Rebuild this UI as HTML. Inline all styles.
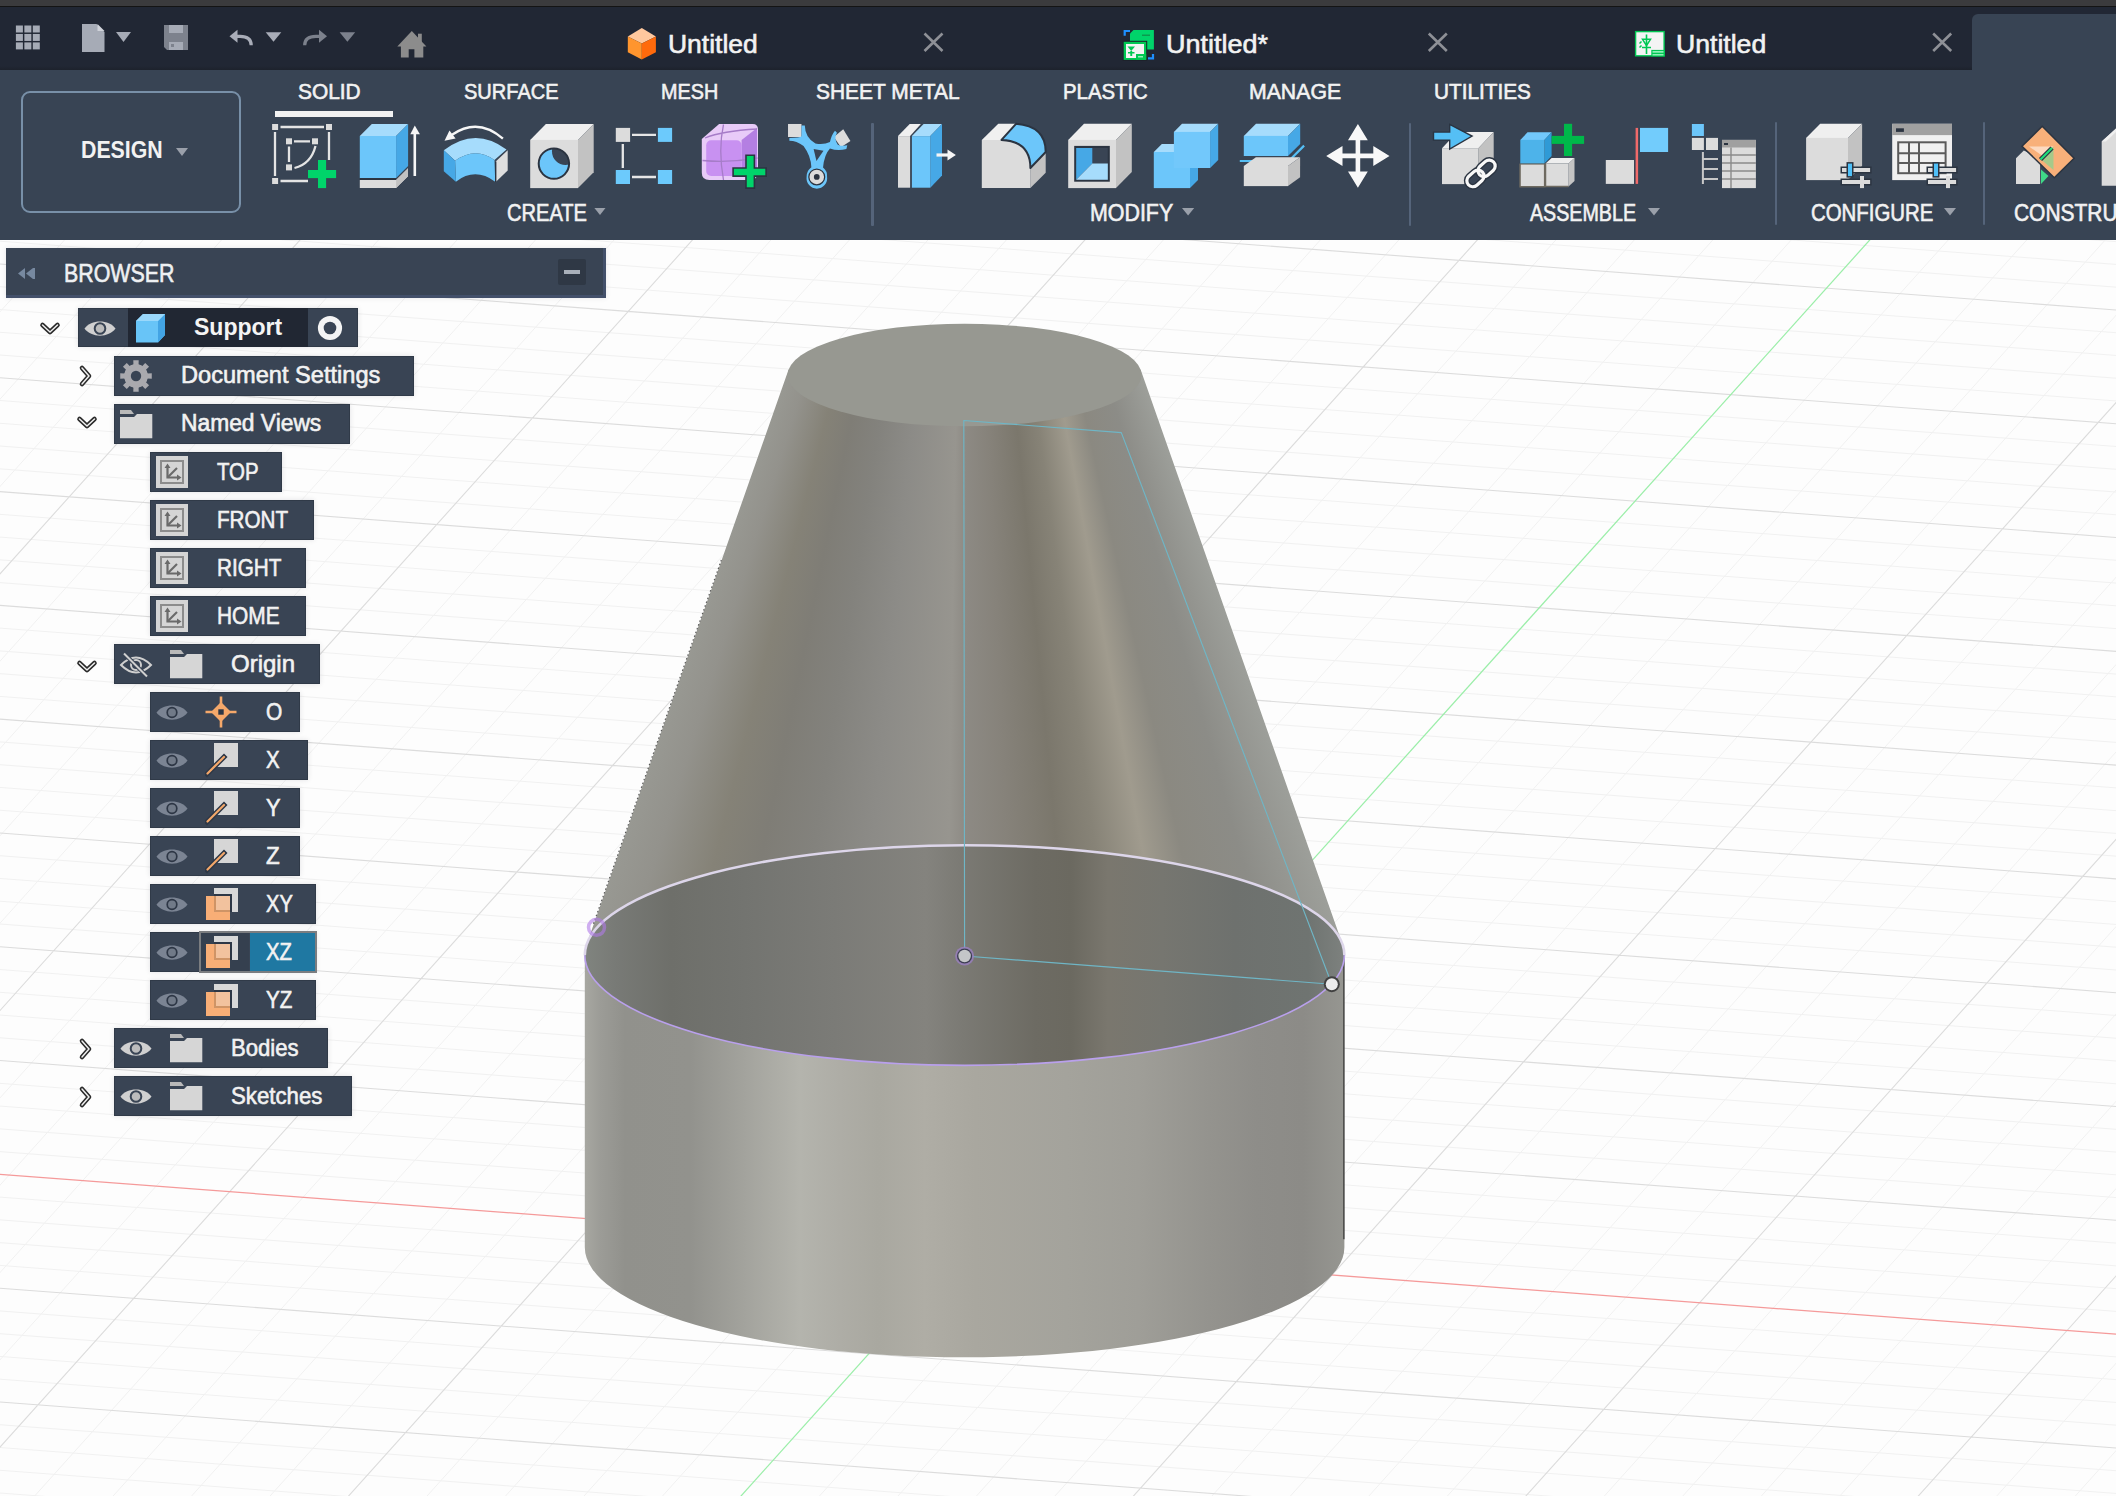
<!DOCTYPE html>
<html><head><meta charset="utf-8"><title>Fusion</title>
<style>
*{box-sizing:border-box;margin:0;padding:0}
html,body{width:2116px;height:1496px;overflow:hidden;background:#fdfdfd;font-family:"Liberation Sans",sans-serif}
.a{position:absolute}
#strip{left:0;top:0;width:2116px;height:6px;background:#3b3b3d}
#strip2{left:0;top:6px;width:2116px;height:1px;background:#141414}
#tabbar{left:0;top:7px;width:2116px;height:63px;background:#212734}
#tabshade{left:0;top:66px;width:1972px;height:4px;background:linear-gradient(#212734,#1d222c)}
#acttab{left:1972px;top:14px;width:144px;height:56px;background:#384454;border-top-left-radius:6px}
#toolbar{left:0;top:70px;width:2116px;height:170px;background:#384454}
#vp{left:0;top:240px;width:2116px;height:1256px;overflow:hidden}
.tt{color:#f4f4f4;font-size:25px;white-space:nowrap}
.tl{color:#f0f0f0;font-size:21px;white-space:nowrap;letter-spacing:0px}
.gl{color:#f0f0f0;font-size:22px;white-space:nowrap}
.sep{width:2.4px;background:#55647a;border-radius:1px}
.row{position:absolute;height:40px;background:#394555;box-shadow:0 4px 4px rgba(0,0,0,0.06)}
.rt{position:absolute;color:#f2f2f2;font-size:23px;white-space:nowrap;top:7px}
</style></head><body>

<div class="a" id="strip"></div><div class="a" id="strip2"></div><div class="a" id="tabbar"></div><div class="a" id="tabshade"></div><div class="a" id="acttab"></div><div class="a" id="toolbar"></div>
<svg class="a" style="left:0;top:0" width="2116" height="1496" viewBox="0 0 2116 1496">
<rect x="0" y="240" width="2116" height="1256" fill="#fdfdfd"/>
<g clip-path="url(#vpclip)"><clipPath id="vpclip"><rect x="0" y="240" width="2116" height="1256"/></clipPath>
<path d="M-3696.7 -675.2L8269.2 228.2M-3715.9 -653.9L8250.0 249.6M-3735.1 -632.6L8230.9 270.9M-3754.2 -611.2L8211.7 292.2M-3792.5 -568.6L8173.4 334.8M-3811.7 -547.3L8154.3 356.1M-3830.8 -526.0L8135.1 377.4M-3850.0 -504.7L8116.0 398.8M-3888.3 -462.0L8077.7 441.4M-3907.4 -440.7L8058.5 462.7M-3926.6 -419.4L8039.4 484.0M-3945.7 -398.1L8020.2 505.3M-3984.1 -355.5L7981.9 548.0M-4003.2 -334.2L7962.7 569.3M-4022.4 -312.8L7943.6 590.6M-4041.5 -291.5L7924.4 611.9M-4079.8 -248.9L7886.1 654.5M-4099.0 -227.6L7867.0 675.8M-4118.1 -206.3L7847.8 697.2M-4137.3 -185.0L7828.7 718.5M-4175.6 -142.3L7790.3 761.1M-4194.8 -121.0L7771.2 782.4M-4213.9 -99.7L7752.0 803.7M-4233.1 -78.4L7732.9 825.0M-4271.4 -35.8L7694.6 867.7M-4290.5 -14.4L7675.4 889.0M-4309.7 6.9L7656.3 910.3M-4328.8 28.2L7637.1 931.6M-4367.1 70.8L7598.8 974.2M-4386.3 92.1L7579.7 995.6M-4405.4 113.4L7560.5 1016.9M-4424.6 134.8L7541.3 1038.2M-4462.9 177.4L7503.0 1080.8M-4482.1 198.7L7483.9 1102.1M-4501.2 220.0L7464.7 1123.4M-4520.4 241.3L7445.6 1144.8M-4558.7 283.9L7407.3 1187.4M-4577.8 305.3L7388.1 1208.7M-4597.0 326.6L7369.0 1230.0M-4616.1 347.9L7349.8 1251.3M-4654.4 390.5L7311.5 1293.9M-4673.6 411.8L7292.3 1315.3M-4692.8 433.1L7273.2 1336.6M-4711.9 454.5L7254.0 1357.9M-4750.2 497.1L7215.7 1400.5M-4769.4 518.4L7196.6 1421.8M-4788.5 539.7L7177.4 1443.1M-4807.7 561.0L7158.3 1464.5M-4846.0 603.7L7120.0 1507.1M-4865.1 625.0L7100.8 1528.4M-4884.3 646.3L7081.7 1549.7M-4903.4 667.6L7062.5 1571.0M-4941.8 710.2L7024.2 1613.7M-4960.9 731.5L7005.0 1635.0M-4980.1 752.9L6985.9 1656.3M-4999.2 774.2L6966.7 1677.6M-5037.5 816.8L6928.4 1720.2M-5056.7 838.1L6909.3 1741.5M-5075.8 859.4L6890.1 1762.9M-5095.0 880.7L6871.0 1784.2M-5133.3 923.4L6832.6 1826.8M-5152.5 944.7L6813.5 1848.1M-5171.6 966.0L6794.3 1869.4M-5190.8 987.3L6775.2 1890.7M-5229.1 1029.9L6736.9 1933.4M-5248.2 1051.3L6717.7 1954.7M-5267.4 1072.6L6698.6 1976.0M-5286.5 1093.9L6679.4 1997.3M-5324.8 1136.5L6641.1 2039.9M-5344.0 1157.8L6622.0 2061.3M-5363.1 1179.1L6602.8 2082.6M-5382.3 1200.5L6583.6 2103.9M2108.6 -3432.0L-5912.4 5493.5M2182.1 -3426.4L-5838.9 5499.1M2255.6 -3420.9L-5765.4 5504.6M2329.1 -3415.3L-5691.9 5510.2M2476.1 -3404.2L-5544.9 5521.3M2549.6 -3398.7L-5471.4 5526.8M2623.1 -3393.1L-5397.9 5532.4M2696.6 -3387.6L-5324.4 5537.9M2843.6 -3376.5L-5177.4 5549.0M2917.1 -3370.9L-5103.9 5554.6M2990.6 -3365.4L-5030.4 5560.1M3064.1 -3359.8L-4956.9 5565.7M3211.1 -3348.7L-4809.9 5576.8M3284.6 -3343.2L-4736.4 5582.3M3358.1 -3337.6L-4662.9 5587.9M3431.6 -3332.1L-4589.4 5593.4M3578.6 -3321.0L-4442.4 5604.5M3652.1 -3315.4L-4368.9 5610.1M3725.6 -3309.9L-4295.4 5615.6M3799.1 -3304.3L-4221.9 5621.2M3946.1 -3293.2L-4074.9 5632.3M4019.6 -3287.7L-4001.4 5637.8M4093.1 -3282.1L-3927.9 5643.4M4166.6 -3276.6L-3854.4 5648.9M4313.6 -3265.5L-3707.4 5660.0M4387.1 -3259.9L-3633.9 5665.5M4460.6 -3254.4L-3560.4 5671.1M4534.1 -3248.8L-3486.9 5676.6M4681.1 -3237.7L-3339.9 5687.7M4754.6 -3232.2L-3266.4 5693.3M4828.1 -3226.6L-3192.9 5698.8M4901.6 -3221.1L-3119.4 5704.4M5048.6 -3210.0L-2972.4 5715.5M5122.1 -3204.4L-2898.9 5721.0M5195.6 -3198.9L-2825.4 5726.6M5269.1 -3193.3L-2751.9 5732.1M5416.1 -3182.2L-2604.9 5743.2M5489.6 -3176.7L-2531.4 5748.8M5563.1 -3171.1L-2457.9 5754.3M5636.6 -3165.6L-2384.4 5759.9M5783.6 -3154.5L-2237.4 5771.0M5857.1 -3149.0L-2163.9 5776.5M5930.6 -3143.4L-2090.4 5782.1M6004.1 -3137.9L-2016.9 5787.6M6151.1 -3126.8L-1869.9 5798.7M6224.6 -3121.2L-1796.4 5804.3M6298.1 -3115.7L-1722.9 5809.8M6371.6 -3110.1L-1649.4 5815.4M6518.6 -3099.0L-1502.4 5826.5M6592.1 -3093.5L-1428.9 5832.0M6665.6 -3087.9L-1355.4 5837.6M6739.1 -3082.4L-1281.9 5843.1M6886.1 -3071.3L-1134.9 5854.2M6959.6 -3065.7L-1061.4 5859.8M7033.1 -3060.2L-987.9 5865.3M7106.6 -3054.6L-914.4 5870.9M7253.6 -3043.5L-767.4 5882.0M7327.1 -3038.0L-693.9 5887.5M7400.6 -3032.4L-620.4 5893.1M7474.1 -3026.9L-546.9 5898.6M7621.1 -3015.8L-399.9 5909.7M7694.6 -3010.2L-326.4 5915.3M7768.1 -3004.7L-252.9 5920.8M7841.6 -2999.1L-179.4 5926.4M7988.6 -2988.0L-32.4 5937.5M8062.1 -2982.5L41.1 5943.0M8135.6 -2976.9L114.6 5948.6M8209.1 -2971.4L188.1 5954.1" stroke="#f1f1f1" stroke-width="1" fill="none"/>
<path d="M-3677.6 -696.5L8288.4 206.9M-3773.4 -589.9L8192.6 313.5M-3869.1 -483.4L8096.8 420.1M-3964.9 -376.8L8001.0 526.6M-4060.7 -270.2L7905.3 633.2M-4156.4 -163.6L7809.5 739.8M-4252.2 -57.1L7713.7 846.4M-4348.0 49.5L7618.0 952.9M-4443.8 156.1L7522.2 1059.5M-4539.5 262.6L7426.4 1166.1M-4635.3 369.2L7330.7 1272.6M-4731.1 475.8L7234.9 1379.2M-4826.8 582.3L7139.1 1485.8M-4922.6 688.9L7043.3 1592.3M-5114.1 902.1L6851.8 1805.5M-5209.9 1008.6L6756.0 1912.1M-5305.7 1115.2L6660.3 2018.6M2035.1 -3437.5L-5985.9 5488.0M2402.6 -3409.8L-5618.4 5515.7M2770.1 -3382.0L-5250.9 5543.5M3137.6 -3354.3L-4883.4 5571.2M3505.1 -3326.5L-4515.9 5599.0M3872.6 -3298.8L-4148.4 5626.7M4240.1 -3271.0L-3780.9 5654.4M4607.6 -3243.3L-3413.4 5682.2M5342.6 -3187.8L-2678.4 5737.7M5710.1 -3160.0L-2310.9 5765.4M6077.6 -3132.3L-1943.4 5793.2M6445.1 -3104.6L-1575.9 5820.9M6812.6 -3076.8L-1208.4 5848.7M7180.1 -3049.1L-840.9 5876.4M7547.6 -3021.3L-473.4 5904.2M7915.1 -2993.6L-105.9 5931.9" stroke="#dcdcdc" stroke-width="1.1" fill="none"/>
<path d="M-5018.4 795.5L6947.6 1698.9" stroke="#f59a9a" stroke-width="1.25" fill="none"/>
<path d="M4975.1 -3215.5L-3045.9 5709.9" stroke="#9beea9" stroke-width="1.25" fill="none"/>
</g>
</svg>
<svg class="a" style="left:0;top:0" width="2116" height="1496"><defs><linearGradient id="cylg" gradientUnits="userSpaceOnUse" x1="584.8" y1="0" x2="1344.4" y2="0"><stop offset="0.0003" stop-color="#a7a7a1"/><stop offset="0.0200" stop-color="#9c9c97"/><stop offset="0.0529" stop-color="#91918c"/><stop offset="0.1385" stop-color="#92928d"/><stop offset="0.2109" stop-color="#a3a39d"/><stop offset="0.2833" stop-color="#b4b4ad"/><stop offset="0.3360" stop-color="#aeada6"/><stop offset="0.3860" stop-color="#a9a8a0"/><stop offset="0.4479" stop-color="#afada5"/><stop offset="0.5137" stop-color="#a9a79f"/><stop offset="0.6348" stop-color="#a4a39c"/><stop offset="0.7283" stop-color="#9f9e98"/><stop offset="0.8217" stop-color="#94938e"/><stop offset="0.8836" stop-color="#8e8d89"/><stop offset="0.9455" stop-color="#8c8b87"/><stop offset="0.9995" stop-color="#969691"/></linearGradient></defs><path d="M584.8 955.3 L584.8 1247.2 A379.8 110.1 0 0 0 1344.4 1247.2 L1344.4 955.3 A379.8 110.1 0 0 1 584.8 955.3 Z" fill="url(#cylg)"/><path d="M1343.9 955.3 L1343.9 1239.2" stroke="#333" stroke-width="1.2"/></svg>
<div class="a" style="left:0;top:0;width:2116px;height:1496px;background:conic-gradient(from 150deg at 964.6px -131.0px, #a3a59f 9.01deg, #9c9e99 10.80deg, #8c8c87 14.36deg, #8b8981 17.57deg, #a09b8e 19.72deg, #878377 22.41deg, #7b776c 24.63deg, #86827a 27.51deg, #8d8a84 29.90deg, #97958f 30.91deg, #8c8b87 35.39deg, #83827d 38.74deg, #7f7d76 41.62deg, #858277 44.16deg, #93928c 47.32deg, #9a9b95 50.17deg, #a0a09a 51.06deg);clip-path:path('M788.5 369.8 L586.8 944.1 A379.8 110.1 0 1 0 1342.4 944.1 L1140.7 369.8 Z')"></div>
<svg class="a" style="left:0;top:0" width="2116" height="1496"><defs><linearGradient id="ing" gradientUnits="userSpaceOnUse" x1="584.8" y1="0" x2="1344.4" y2="0"><stop offset="0.0003" stop-color="#80847f"/><stop offset="0.0411" stop-color="#787a76"/><stop offset="0.1135" stop-color="#6e6f6a"/><stop offset="0.2096" stop-color="#737470"/><stop offset="0.3294" stop-color="#7b7b77"/><stop offset="0.4492" stop-color="#84837e"/><stop offset="0.4966" stop-color="#7b7a74"/><stop offset="0.5927" stop-color="#6d6b63"/><stop offset="0.6401" stop-color="#6b6960"/><stop offset="0.6888" stop-color="#7a776e"/><stop offset="0.7599" stop-color="#767670"/><stop offset="0.8560" stop-color="#6e716e"/><stop offset="0.9521" stop-color="#6f7471"/><stop offset="0.9995" stop-color="#7d817e"/></linearGradient></defs><ellipse cx="964.6" cy="955.3" rx="379.8" ry="110.1" fill="url(#ing)"/><ellipse cx="964.6" cy="375.0" rx="177.0" ry="51.3" fill="#979891"/><path d="M721.3 560.0 L592.7 926.0" stroke="#222" stroke-width="1.1" stroke-dasharray="1.5 2.5" stroke-opacity="0.75"/><path d="M584.8 955.3 A379.8 110.1 0 0 1 1344.4 955.3" stroke="#ddd6ea" stroke-width="2.6" fill="none"/><path d="M584.8 955.3 A379.8 110.1 0 0 0 1344.4 955.3" stroke="#b9a0ec" stroke-width="1.6" fill="none"/><path d="M964.6 956 L963.8 420.5 L1121.3 432.6 L1331.8 984.2 Z" stroke="#6fb6c6" stroke-width="1.15" fill="none" stroke-linejoin="round"/><circle cx="964.6" cy="956" r="9.5" fill="#9a7fc0" fill-opacity="0.8"/><circle cx="964.6" cy="956" r="7.6" fill="#3c3d52"/><circle cx="964.6" cy="956" r="6.2" fill="#c4c6c8"/><circle cx="1331.8" cy="984.2" r="8" fill="#404040"/><circle cx="1331.8" cy="984.2" r="6" fill="#ececec"/><circle cx="596.5" cy="927.3" r="8" fill="none" stroke="#b07ae8" stroke-width="3.5" stroke-opacity="0.6"/></svg>
<div class="a" style="left:668.00px;top:31.19px;font-size:26.29px;line-height:26.29px;color:#f2f2f2;white-space:nowrap;transform:scaleX(1.0066);transform-origin:0 0;-webkit-text-stroke:0.60px #f2f2f2;">Untitled</div>
<div class="a" style="left:1165.70px;top:31.19px;font-size:26.29px;line-height:26.29px;color:#f2f2f2;white-space:nowrap;transform:scaleX(1.0276);transform-origin:0 0;-webkit-text-stroke:0.60px #f2f2f2;">Untitled*</div>
<div class="a" style="left:1675.60px;top:31.19px;font-size:26.29px;line-height:26.29px;color:#f2f2f2;white-space:nowrap;transform:scaleX(1.0122);transform-origin:0 0;-webkit-text-stroke:0.60px #f2f2f2;">Untitled</div>
<div class="a" style="left:297.80px;top:80.70px;font-size:21.86px;line-height:21.86px;color:#f2f2f2;white-space:nowrap;transform:scaleX(0.9547);transform-origin:0 0;-webkit-text-stroke:0.60px #f2f2f2;">SOLID</div>
<div class="a" style="left:464.40px;top:80.70px;font-size:21.86px;line-height:21.86px;color:#f2f2f2;white-space:nowrap;transform:scaleX(0.9160);transform-origin:0 0;-webkit-text-stroke:0.60px #f2f2f2;">SURFACE</div>
<div class="a" style="left:660.50px;top:80.70px;font-size:21.86px;line-height:21.86px;color:#f2f2f2;white-space:nowrap;transform:scaleX(0.9055);transform-origin:0 0;-webkit-text-stroke:0.60px #f2f2f2;">MESH</div>
<div class="a" style="left:816.40px;top:80.70px;font-size:21.86px;line-height:21.86px;color:#f2f2f2;white-space:nowrap;transform:scaleX(0.9584);transform-origin:0 0;-webkit-text-stroke:0.60px #f2f2f2;">SHEET METAL</div>
<div class="a" style="left:1062.90px;top:80.70px;font-size:21.86px;line-height:21.86px;color:#f2f2f2;white-space:nowrap;transform:scaleX(0.9304);transform-origin:0 0;-webkit-text-stroke:0.60px #f2f2f2;">PLASTIC</div>
<div class="a" style="left:1248.70px;top:80.70px;font-size:21.86px;line-height:21.86px;color:#f2f2f2;white-space:nowrap;transform:scaleX(0.9720);transform-origin:0 0;-webkit-text-stroke:0.60px #f2f2f2;">MANAGE</div>
<div class="a" style="left:1434.00px;top:80.70px;font-size:21.86px;line-height:21.86px;color:#f2f2f2;white-space:nowrap;transform:scaleX(0.9503);transform-origin:0 0;-webkit-text-stroke:0.60px #f2f2f2;">UTILITIES</div>
<div class="a" style="left:507.00px;top:202.05px;font-size:23.43px;line-height:23.43px;color:#f2f2f2;white-space:nowrap;transform:scaleX(0.8579);transform-origin:0 0;-webkit-text-stroke:0.60px #f2f2f2;">CREATE</div>
<div class="a" style="left:1090.40px;top:202.05px;font-size:23.43px;line-height:23.43px;color:#f2f2f2;white-space:nowrap;transform:scaleX(0.9129);transform-origin:0 0;-webkit-text-stroke:0.60px #f2f2f2;">MODIFY</div>
<div class="a" style="left:1530.00px;top:202.05px;font-size:23.43px;line-height:23.43px;color:#f2f2f2;white-space:nowrap;transform:scaleX(0.8394);transform-origin:0 0;-webkit-text-stroke:0.60px #f2f2f2;">ASSEMBLE</div>
<div class="a" style="left:1810.50px;top:202.05px;font-size:23.43px;line-height:23.43px;color:#f2f2f2;white-space:nowrap;transform:scaleX(0.8714);transform-origin:0 0;-webkit-text-stroke:0.60px #f2f2f2;">CONFIGURE</div>
<div class="a" style="left:2014.40px;top:202.05px;font-size:23.43px;line-height:23.43px;color:#f2f2f2;white-space:nowrap;transform:scaleX(0.8942);transform-origin:0 0;-webkit-text-stroke:0.60px #f2f2f2;">CONSTRU</div>
<div class="a" style="left:80.70px;top:138.73px;font-size:23.57px;line-height:23.57px;font-weight:bold;color:#f2f2f2;white-space:nowrap;transform:scaleX(0.9049);transform-origin:0 0;">DESIGN</div>
<div class="a" style="left:21px;top:91px;width:220px;height:122px;border:2px solid #7890a8;border-radius:9px"></div>
<div class="a" style="left:275px;top:111px;width:118px;height:6px;background:#f2f2f2"></div>
<div class="a sep" style="left:871.2px;top:123px;height:103px"></div>
<div class="a sep" style="left:1408.8px;top:123px;height:103px"></div>
<div class="a sep" style="left:1774.8px;top:122px;height:103px"></div>
<div class="a sep" style="left:1983px;top:122px;height:103px"></div>

<svg class="a" style="left:0;top:0" width="2116" height="240" viewBox="0 0 2116 240"><rect x="15.90" y="25.50" width="7.00" height="7.00" fill="#a6abb6" /><rect x="15.90" y="33.95" width="7.00" height="7.00" fill="#a6abb6" /><rect x="15.90" y="42.40" width="7.00" height="7.00" fill="#a6abb6" /><rect x="24.35" y="25.50" width="7.00" height="7.00" fill="#a6abb6" /><rect x="24.35" y="33.95" width="7.00" height="7.00" fill="#a6abb6" /><rect x="24.35" y="42.40" width="7.00" height="7.00" fill="#a6abb6" /><rect x="32.80" y="25.50" width="7.00" height="7.00" fill="#a6abb6" /><rect x="32.80" y="33.95" width="7.00" height="7.00" fill="#a6abb6" /><rect x="32.80" y="42.40" width="7.00" height="7.00" fill="#a6abb6" /><path d="M82 24 H96.5 L104.5 32 V52 H82 Z" fill="#a6abb6" /><path d="M97.5 24 L104.5 31 H97.5 Z" fill="#d0d3da" /><path d="M116 32 H131 L123.5 42 Z" fill="#a6abb6" /><path d="M164 25 H188 V50 H167 L164 47 Z" fill="#7d828d" /><rect x="169.00" y="25.00" width="14.00" height="8.00" fill="#a6abb6" /><rect x="169.00" y="42.00" width="14.00" height="8.00" fill="#a6abb6" /><rect x="171.00" y="44.00" width="3.00" height="3.00" fill="#7d828d" /><path d="M232 36.3 H240 Q251.2 36.3 251.2 45.2" stroke="#a9adb8" stroke-width="3.2" fill="none" /><path d="M229.5 36.3 L237.5 29.8 V42.8 Z" fill="#a9adb8" /><path d="M265.7 32.2 H281.3 L273.5 41.8 Z" fill="#a9adb8" /><path d="M324 36.3 H316 Q304.7 36.3 304.7 45.2" stroke="#7c818c" stroke-width="3.2" fill="none" /><path d="M327 36.3 L319 29.8 V42.8 Z" fill="#7c818c" /><path d="M339.6 32.2 H355.2 L347.4 41.8 Z" fill="#7c818c" /><path d="M397.3 46.6 L411.8 31.1 L426.4 46.6 Z" fill="#8c8c8c" /><rect x="418.00" y="33.70" width="3.80" height="8.30" fill="#8c8c8c" /><path d="M400.9 46 H423.3 V57.6 H414.4 V49.3 H408.7 V57.6 H400.9 Z" fill="#8c8c8c" /><path d="M641.8 28 L655.9 36.4 L641.8 43.6 L627.8 36.4 Z" fill="#ffc89e" /><path d="M627.8 36.4 L641.8 43.6 V59.4 L627.8 52.2 Z" fill="#ff952e" /><path d="M655.9 36.4 L641.8 43.6 V59.4 L655.9 52.2 Z" fill="#ff6a0c" /><path d="M924.5 33.5 L942.5 51 M942.5 33.5 L924.5 51" stroke="#8e9096" stroke-width="2.6" fill="none" /><path d="M1428.8 33.5 L1446.8 51 M1446.8 33.5 L1428.8 51" stroke="#8e9096" stroke-width="2.6" fill="none" /><path d="M1933.2 33.5 L1951.2 51 M1951.2 33.5 L1933.2 51" stroke="#8e9096" stroke-width="2.6" fill="none" /><path d="M1124.7 35.8 V31 H1130" stroke="#1e90ff" stroke-width="2.2" fill="none" /><path d="M1153 53.9 V58.4 H1148" stroke="#1e90ff" stroke-width="2.2" fill="none" /><path d="M1133.5 30 H1153.9 V49.6 H1130 V33.5 Z" fill="#00d46a" /><rect x="1142.00" y="34.50" width="8.00" height="1.50" fill="#0b9a4f" /><rect x="1122.70" y="40.80" width="24.50" height="20.10" fill="#1d222b" /><rect x="1123.70" y="41.80" width="22.50" height="18.10" fill="#00c853" /><rect x="1126.00" y="44.00" width="18.00" height="14.00" fill="#f4f4f4" /><path d="M1127.5 46.5 H1135 L1131.2 51 Z" fill="#00c853" /><rect x="1130.30" y="51.00" width="1.90" height="5.00" fill="#00c853" /><rect x="1128.00" y="52.00" width="6.50" height="1.50" fill="#00c853" /><rect x="1136.00" y="54.00" width="10.20" height="5.90" fill="#00c853" /><rect x="1138.00" y="56.00" width="5.00" height="1.50" fill="#8ff0b8" /><rect x="1634.90" y="30.90" width="29.90" height="25.60" fill="#00c853" /><rect x="1636.30" y="32.30" width="27.10" height="22.80" fill="#f4f4f4" /><path d="M1646.5 34.5 V54 M1642 47.5 H1651" stroke="#00c853" stroke-width="1.6" fill="none" /><path d="M1642.5 39.3 H1650.5 L1646.5 45.5 Z" fill="none" stroke="#00c853" stroke-width="1.5"/><path d="M1639.5 43.5 L1641.5 41.5 M1639.5 47.5 L1641.5 45.5" stroke="#00c853" stroke-width="1.5" fill="none" /><rect x="1651.30" y="49.90" width="13.50" height="6.60" fill="#00c853" /><rect x="1652.50" y="51.00" width="11.00" height="1.70" fill="#8ff0b8" /><rect x="1652.50" y="54.00" width="11.00" height="1.50" fill="#8ff0b8" /><rect x="272.10" y="124.00" width="6.00" height="6.00" fill="#dcdcdc" /><rect x="326.00" y="124.00" width="6.00" height="6.00" fill="#dcdcdc" /><rect x="272.10" y="178.00" width="6.00" height="6.00" fill="#dcdcdc" /><rect x="286.00" y="138.30" width="6.00" height="6.00" fill="#dcdcdc" /><rect x="312.00" y="138.30" width="6.00" height="6.00" fill="#dcdcdc" /><rect x="286.00" y="164.40" width="6.00" height="6.00" fill="#dcdcdc" /><path d="M280.5 127 H324 M275 132 V176 M329 132 V160 M280.5 181 H308 M294 141.3 H310 M289 146.5 V162" stroke="#e4e4e4" stroke-width="2.3" fill="none" /><path d="M315.5 146 Q311 164 294.5 168" stroke="#e4e4e4" stroke-width="2.3" fill="none" /><rect x="308.00" y="170.00" width="28.10" height="8.10" fill="#00d46a" /><rect x="318.00" y="160.00" width="8.10" height="28.10" fill="#00d46a" /><path d="M359.8 136.0 L371.8 124.0 L408.1 124.0 L396.1 136.0 Z" fill="#a6dcfc" /><path d="M396.1 136.0 L408.1 124.0 L408.1 166.1 L396.1 178.1 Z" fill="#46a8e6" /><rect x="359.80" y="136.00" width="36.30" height="42.10" fill="#6cc6fa" /><rect x="359.80" y="178.10" width="36.30" height="2.00" fill="#2b3441" /><path d="M359.8 180.1 H396.1 L408 168.2 V176.2 L396.1 188.1 H359.8 Z" fill="#dcdcdc" /><path d="M396.1 180.1 L408 168.2 V176.2 L396.1 188.1 Z" fill="#c2c2c2" /><path d="M414.8 133 V176" stroke="#f6f6f6" stroke-width="2.6" fill="none" /><path d="M410.3 134.2 L414.8 125.4 L419.9 134.2 Z" fill="#f6f6f6" /><path d="M443.8 150.3 Q475.2 126 506.5 149.5 L494.5 160 Q475.2 146 455.1 160.8 Z" fill="#a6dcfc" /><path d="M455.1 160.8 Q475.2 146 494.5 160 L495.2 181.8 Q475.2 167 455.9 181.7 Z" fill="#6cc6fa" /><path d="M443.8 150.3 L455.1 160.8 L455.9 181.7 L443.8 171.2 Z" fill="#46a8e6" /><path d="M495.7 161.6 L507.7 150.3 V170.4 L495.7 182.1 Z" fill="#dedede" /><path d="M495.7 161.6 V182.1" stroke="#2b3441" stroke-width="1.4" fill="none" /><path d="M502.9 138.7 Q478 117 452 134.8" stroke="#f6f6f6" stroke-width="2.4" fill="none" /><path d="M444.5 140.8 L449.5 130.5 L455.6 138.6 Z" fill="#f6f6f6" /><path d="M530.2 139.9 L545.9 124.0 L593.7 124.0 L578.0 139.9 Z" fill="#efefef" /><path d="M578.0 139.9 L593.7 124.0 L593.7 172.2 L578.0 188.1 Z" fill="#c2c2c2" /><rect x="530.20" y="139.90" width="47.80" height="48.20" fill="#dcdcdc" /><clipPath id="hc"><circle cx="553.9" cy="163.6" r="15"/></clipPath><circle cx="553.9" cy="163.6" r="15" fill="#6cc6fa"/><circle cx="565.5" cy="151.5" r="13.5" fill="#394454" clip-path="url(#hc)"/><circle cx="553.9" cy="163.6" r="15.2" fill="none" stroke="#2b3441" stroke-width="2"/><rect x="615.80" y="127.90" width="14.30" height="14.00" fill="#dcdcdc" /><rect x="657.90" y="127.90" width="14.20" height="14.00" fill="#6ccafc" /><rect x="615.80" y="170.00" width="14.20" height="14.00" fill="#6ccafc" /><rect x="657.90" y="170.00" width="14.20" height="14.00" fill="#6ccafc" /><path d="M632 134.9 H656 M622.8 144 V168 M632 177 H656" stroke="#e6e6e6" stroke-width="2.3" fill="none" /><path d="M701.8 139.1 L719.1 124 H752.8 Q758 124 758 129.5 V171.2 Q758 180.1 749.6 180.1 H709.4 Q701.8 180.1 701.8 172.8 Z" fill="#e8cbf8" /><path d="M741.6 140 L757 128 V172 Q757 176 752 176 H741.6 Z" fill="#b47fe2" /><rect x="706.2" y="140.3" width="35.4" height="35.7" rx="5" fill="#c891f1"/><path d="M702.5 160.5 Q730 163 757.5 158 M723.5 124.5 Q718 150 723.5 180 M705 138 Q722 131 757 129" stroke="#a67cc8" stroke-width="1.3" fill="none" /><path d="M746 155.2 H754.4 V168 H766.1 V176.1 H754.4 V188.1 H746 V176.1 H733.1 V168 H746 Z" fill="#00d46a" stroke="#2b3441" stroke-width="1.6"/><g transform="translate(775 115) scale(0.08979)"><rect x="145" y="100" width="150" height="145" fill="#dcdcdc"/><path d="M655 245 L760 160 L840 290 L735 360 Z" fill="#dcdcdc"/><path d="M295 118 L332 118 Q335 255 450 318 Q545 335 612 300 Q630 220 668 175 L690 198 Q652 262 700 330 Q745 352 805 338 L795 378 Q700 405 612 372 Q548 440 535 585 Q585 625 580 690 A115 115 0 1 1 352 690 Q350 620 405 582 Q400 455 318 345 Q240 288 160 288 L160 255 Q280 255 295 238 Z" fill="#6cc6fa"/><path d="M430 378 L540 398 L462 512 Z" fill="#394454"/><circle cx="465" cy="690" r="88" fill="#dcdcdc" stroke="#2b3441" stroke-width="14"/><circle cx="465" cy="690" r="32" fill="#2b3441"/></g><path d="M898 136.1 L909.7 124 H920.9 L910.1 136.1 Z" fill="#f0f0f0" /><rect x="898.00" y="136.10" width="12.10" height="51.60" fill="#dcdcdc" /><path d="M911.9 136.1 L923.6 124.0 L942.0 124.0 L930.3 136.1 Z" fill="#a6dcfc" /><path d="M930.3 136.1 L942.0 124.0 L942.0 175.6 L930.3 187.7 Z" fill="#46a8e6" /><rect x="911.90" y="136.10" width="18.40" height="51.60" fill="#6cc6fa" /><path d="M936.5 155 H948.5" stroke="#f6f6f6" stroke-width="3.2" fill="none" stroke-linecap="butt"/><path d="M947.5 149.5 L955.9 155 L947.5 160.5 Z" fill="#f6f6f6" /><path d="M981.8 139.9 L998.3 123.8 H1016 L1001.5 139.9 Z" fill="#f0f0f0" /><path d="M1030.4 168 L1045.7 152 V172.8 L1030.4 188.1 Z" fill="#c2c2c2" /><path d="M981.8 139.9 H1001.5 Q1030.4 141 1030.4 168 V188.1 H981.8 Z" fill="#dcdcdc" /><path d="M1001.5 139.9 L1016 123.8 Q1045.7 126 1045.7 152 L1030.4 168 Q1030.4 141 1001.5 139.9 Z" fill="#6cc6fa" stroke="#2b3441" stroke-width="2" stroke-linejoin="round"/><path d="M1068.2 139.9 L1084.0 123.8 L1131.8 123.8 L1116.0 139.9 Z" fill="#efefef" /><path d="M1116.0 139.9 L1131.8 123.8 L1131.8 172.0 L1116.0 188.1 Z" fill="#c2c2c2" /><rect x="1068.20" y="139.90" width="47.80" height="48.20" fill="#dcdcdc" /><rect x="1074.20" y="145.90" width="35.60" height="35.80" fill="#2b3441" /><rect x="1076.20" y="147.90" width="31.60" height="31.80" fill="#394454" /><path d="M1076.2 147.9 H1092.3 V163.6 L1076.2 179.7 Z" fill="#46a8e6" /><path d="M1076.2 179.7 L1092.3 163.6 H1107.8 V179.7 Z" fill="#a6dcfc" /><path d="M1153.8 152.0 L1161.8 143.9 L1198.0 143.9 L1190.0 152.0 Z" fill="#a6dcfc" /><path d="M1190.0 152.0 L1198.0 143.9 L1198.0 180.0 L1190.0 188.1 Z" fill="#46a8e6" /><rect x="1153.80" y="152.00" width="36.20" height="36.10" fill="#6cc6fa" /><path d="M1173.9 131.9 L1182.0 123.8 L1218.2 123.8 L1210.1 131.9 Z" fill="#a6dcfc" /><path d="M1210.1 131.9 L1218.2 123.8 L1218.2 159.9 L1210.1 168.0 Z" fill="#46a8e6" /><rect x="1173.90" y="131.90" width="36.20" height="36.10" fill="#72c8fb" /><rect x="1173.90" y="152.00" width="16.10" height="16.00" fill="#72c8fb" /><path d="M1243.8 135.9 L1256.0 123.8 L1300.2 123.8 L1288.0 135.9 Z" fill="#a6dcfc" /><path d="M1288.0 135.9 L1300.2 123.8 L1300.2 143.9 L1288.0 156.0 Z" fill="#46a8e6" /><rect x="1243.80" y="135.90" width="44.20" height="20.10" fill="#6cc6fa" /><path d="M1239.8 161 H1288.8 L1304.1 145.6" stroke="#55bff5" stroke-width="2.2" fill="none" /><path d="M1243.8 166.0 L1255.9 157.2 L1300.1 157.2 L1288.0 166.0 Z" fill="#dcdcdc" /><path d="M1288.0 166.0 L1300.1 157.2 L1300.1 177.3 L1288.0 186.1 Z" fill="#c2c2c2" /><rect x="1243.80" y="166.00" width="44.20" height="20.10" fill="#dcdcdc" /><path d="M1357.9 124 L1367.8 140.2 H1360.2 V153.6 H1373.3 V145.9 L1389.5 155.9 L1373.3 165.9 V158.2 H1360.2 V171.5 H1367.8 L1357.9 187.7 L1348 171.5 H1355.6 V158.2 H1342.5 V165.9 L1326.2 155.9 L1342.5 145.9 V153.6 H1355.6 V140.2 H1348 Z" fill="#f8f8f8" /><path d="M1442.0 148.2 L1457.3 132.1 L1493.7 132.1 L1478.4 148.2 Z" fill="#efefef" /><path d="M1478.4 148.2 L1493.7 132.1 L1493.7 168.0 L1478.4 184.1 Z" fill="#c2c2c2" /><rect x="1442.00" y="148.20" width="36.40" height="35.90" fill="#dcdcdc" /><path d="M1433.5 132.1 H1449.7 V124.4 L1472.1 136.1 L1449.7 149.1 V140.1 H1433.5 Z" fill="#55bff5" stroke="#2b3441" stroke-width="1.4"/><g transform="translate(1481 173.4) rotate(-42)"><rect x="-17" y="-6" width="19" height="12" rx="6" fill="#394454" stroke="#2b3441" stroke-width="6"/><rect x="-2" y="-6" width="19" height="12" rx="6" fill="#394454" stroke="#2b3441" stroke-width="6"/><rect x="-17" y="-6" width="19" height="12" rx="6" fill="none" stroke="#f8f8f8" stroke-width="3.2"/><rect x="-2" y="-6" width="19" height="12" rx="6" fill="none" stroke="#f8f8f8" stroke-width="3.2"/></g><path d="M1520.3 139.9 L1527.5 132.3 L1551.6 132.3 L1544.4 139.9 Z" fill="#72c8fb" /><path d="M1544.4 139.9 L1551.6 132.3 L1551.6 156.0 L1544.4 163.6 Z" fill="#2f9ad6" /><rect x="1520.30" y="139.90" width="24.10" height="23.70" fill="#4db3ea" /><rect x="1519.30" y="163.60" width="26.10" height="23.90" fill="#6e6a60" /><rect x="1520.80" y="164.60" width="23.10" height="21.40" fill="#dcdcdc" /><path d="M1545.6 163.6 L1551.6 158.0 L1574.5 158.0 L1568.5 163.6 Z" fill="#eeeeee" /><path d="M1568.5 163.6 L1574.5 158.0 L1574.5 180.9 L1568.5 186.5 Z" fill="#c4c4c4" /><rect x="1545.60" y="163.60" width="22.90" height="22.90" fill="#dcdcdc" /><path d="M1545.6 163.6 V186.5 H1568.5" stroke="#6e6a60" stroke-width="1.3" fill="none" /><rect x="1551.60" y="135.90" width="32.50" height="8.00" fill="#00b84a" /><rect x="1564.00" y="123.80" width="8.10" height="32.20" fill="#00b84a" /><rect x="1605.80" y="160.00" width="28.20" height="23.90" fill="#dcdcdc" /><rect x="1635.60" y="127.90" width="2.50" height="56.00" fill="#f06a6a" /><rect x="1640.00" y="127.90" width="28.10" height="24.10" fill="#72ccfc" /><rect x="1691.90" y="124.00" width="12.00" height="12.00" fill="#6cc6fa" /><rect x="1691.90" y="137.90" width="12.00" height="12.10" fill="#dcdcdc" /><rect x="1706.00" y="137.90" width="12.00" height="12.10" fill="#dcdcdc" /><path d="M1702.9 152.1 V184 M1703 159 H1718 M1703 169 H1718 M1703 179 H1718" stroke="#c8c8c8" stroke-width="2" fill="none" /><rect x="1722.00" y="139.90" width="33.90" height="48.20" fill="#dcdcdc" /><rect x="1722.00" y="139.90" width="33.90" height="7.60" fill="#a0a0a0" /><rect x="1724.00" y="143.00" width="4.00" height="2.00" fill="#2b3441" /><path d="M1722 155 H1755.9 M1722 163 H1755.9 M1722 171 H1755.9 M1722 179 H1755.9 M1731 147.5 V188.1" stroke="#8a8a8a" stroke-width="1.4" fill="none" /><path d="M1806.1 137.9 L1820.2 123.8 L1862.1 123.8 L1848.0 137.9 Z" fill="#efefef" /><path d="M1848.0 137.9 L1862.1 123.8 L1862.1 166.0 L1848.0 180.1 Z" fill="#c2c2c2" /><rect x="1806.10" y="137.90" width="41.90" height="42.20" fill="#dcdcdc" /><rect x="1840.50" y="166.50" width="31.10" height="7.00" fill="#2b3441" /><rect x="1842.00" y="168.00" width="28.10" height="4.00" fill="#dcdcdc" /><rect x="1846.50" y="162.10" width="7.00" height="15.50" fill="#2b3441" /><rect x="1848.00" y="163.60" width="4.00" height="12.50" fill="#4fc0f8" /><rect x="1840.50" y="178.50" width="31.10" height="7.00" fill="#2b3441" /><rect x="1842.00" y="180.00" width="28.10" height="4.00" fill="#dcdcdc" /><rect x="1860.00" y="176.00" width="4.00" height="12.10" fill="#dcdcdc" /><rect x="1892.20" y="123.80" width="59.80" height="56.30" fill="#f0f0f0" /><rect x="1892.20" y="123.80" width="59.80" height="11.30" fill="#a0a0a0" /><rect x="1896.00" y="128.30" width="7.90" height="3.60" fill="#2b3441" /><rect x="1898.20" y="142.30" width="47.40" height="30.90" fill="none" stroke="#5a5a5a" stroke-width="2"/><path d="M1909 142.3 V173.2 M1919 142.3 V173.2 M1898.2 153.2 H1945.6 M1898.2 163 H1945.6" stroke="#5a5a5a" stroke-width="2" fill="none" /><rect x="1926.50" y="166.50" width="31.10" height="7.00" fill="#2b3441" /><rect x="1928.00" y="168.00" width="28.10" height="4.00" fill="#dcdcdc" /><rect x="1932.50" y="162.10" width="7.00" height="15.50" fill="#2b3441" /><rect x="1934.00" y="163.60" width="4.00" height="12.50" fill="#4fc0f8" /><rect x="1926.50" y="178.50" width="31.10" height="7.00" fill="#2b3441" /><rect x="1928.00" y="180.00" width="28.10" height="4.00" fill="#dcdcdc" /><rect x="1946.00" y="176.00" width="4.00" height="12.10" fill="#dcdcdc" /><path d="M2016 184.1 V158.2 L2023.8 150.4 L2040.1 158.2 V184.1 Z" fill="#dcdcdc" /><path d="M2042.2 126.3 L2074.1 158.2 L2054.3 177.7 L2022 146.2 Z" fill="#f8b07a" stroke="#2b3441" stroke-width="1.5"/><path d="M2029 146.5 H2053.5 L2044 157 Z" fill="#fcd9c0" /><path d="M2053.5 146.5 V170 L2040.5 159 Z" fill="#a5c98a" /><path d="M2040.5 159.5 L2052 148" stroke="#2b3441" stroke-width="4.5" fill="none" /><path d="M2040.5 159.5 L2052 148" stroke="#1ee07a" stroke-width="2.2" fill="none" /><path d="M2041 169.5 L2048.5 176 L2041 184 Z" fill="#3fd888" /><path d="M2101.7 185.8 V141.5 L2116 128.4 V185.8 Z" fill="#dcdcdc" /><path d="M2101.7 141.5 L2116 128.4 V132 L2106 141.5 Z" fill="#efefef" /><path d="M176.0 148.0 H188.0 L182.0 156.0 Z" fill="#9aa0aa" /><path d="M594.4 208.0 H605.5 L600.0 215.0 Z" fill="#9aa0aa" /><path d="M1182.0 208.0 H1194.2 L1188.1 215.5 Z" fill="#9aa0aa" /><path d="M1648.0 208.0 H1660.0 L1654.0 215.5 Z" fill="#9aa0aa" /><path d="M1944.0 208.0 H1956.0 L1950.0 215.5 Z" fill="#9aa0aa" /></svg>
<div class="a" style="left:6.0px;top:248.0px;width:600.0px;height:49.5px;background:#394454;box-shadow:0 0 5px rgba(60,60,80,0.12), inset -3px -3px 0 #43506a"></div>
<svg class="a" style="left:18.0px;top:267.0px" width="18" height="13" viewBox="0 0 18 13"><path d="M0 6.5 L7 1 V12 Z M8 6.5 L15 1 V12 Z" fill="#7789a0"/><rect x="15" y="1" width="2" height="11" fill="#7789a0"/></svg>
<div class="a" style="left:63.80px;top:261.11px;font-size:25.57px;line-height:25.57px;color:#eef0f2;white-space:nowrap;transform:scaleX(0.8366);transform-origin:0 0;-webkit-text-stroke:0.60px #eef0f2;">BROWSER</div>
<div class="a" style="left:558.0px;top:259.0px;width:28.0px;height:26.0px;background:#2f3845;border-radius:2px"></div>
<div class="a" style="left:563.7px;top:269.8px;width:16.3px;height:4.6px;background:#a9b0ba;"></div>
<svg class="a" style="left:38.0px;top:321.0px" width="24" height="18" viewBox="0 0 24 18"><path d="M4.5 4 L12 11 L19.5 4" stroke="#2a2a2a" stroke-width="4.6" fill="none" stroke-linecap="round" stroke-linejoin="round"/><path d="M4.5 4 L12 11 L19.5 4" stroke="#f0f0f0" stroke-width="1.5" fill="none" stroke-linecap="round" stroke-linejoin="round"/></svg>
<div class="a" style="left:78.3px;top:308.3px;width:279.3px;height:39.0px;background:#394454;box-shadow:0 0 5px rgba(60,60,80,0.14), inset 0 0 0 1px #303a48"></div>
<div class="a" style="left:128.2px;top:308.3px;width:179.5px;height:39.0px;background:#212733;"></div>
<svg class="a" style="left:84.0px;top:317.5px" width="32" height="21" viewBox="0 0 32 21"><path d="M0.5 10.5 C7 1 25 1 31.5 10.5 C25 20 7 20 0.5 10.5 Z" fill="#d0d0d0"/><circle cx="16" cy="10.5" r="5.3" fill="#bcbcbc" stroke="#394454" stroke-width="2"/></svg>
<svg class="a" style="left:135.5px;top:313.7px" width="30" height="29" viewBox="0 0 30 29"><path d="M0 7 L7 0 H29 V21 L22 28.5 H0 Z" fill="#68c4f7"/><path d="M22 7 L29 0 V21 L22 28.5 Z" fill="#43a4e4"/><path d="M0 7 L7 0 H29 L22 7 Z" fill="#9ad8fb"/></svg>
<div class="a" style="left:194.10px;top:315.41px;font-size:24.29px;line-height:24.29px;font-weight:bold;color:#f4f4f4;white-space:nowrap;transform:scaleX(0.9481);transform-origin:0 0;">Support</div>
<svg class="a" style="left:316.0px;top:314.0px" width="28" height="28" viewBox="0 0 28 28"><circle cx="14" cy="14" r="12.1" fill="#f4f4f4"/><circle cx="14" cy="14" r="6.3" fill="#394454"/></svg>
<svg class="a" style="left:77.5px;top:364.0px" width="18" height="24" viewBox="0 0 18 24"><path d="M4 4 L11 12 L4 20" stroke="#2a2a2a" stroke-width="4.6" fill="none" stroke-linecap="round" stroke-linejoin="round"/><path d="M4 4 L11 12 L4 20" stroke="#f0f0f0" stroke-width="1.5" fill="none" stroke-linecap="round" stroke-linejoin="round"/></svg>
<div class="a" style="left:114.3px;top:356.2px;width:299.6px;height:39.4px;background:#394454;box-shadow:0 0 5px rgba(60,60,80,0.14), inset 0 0 0 1px #303a48"></div>
<svg class="a" style="left:120.0px;top:360.0px" width="32" height="32" viewBox="0 0 32 32"><path d="M13.42 4.48 L13.29 0.23 L18.71 0.23 L18.58 4.48 L22.32 6.04 L25.24 2.94 L29.06 6.76 L25.96 9.68 L27.52 13.42 L31.77 13.29 L31.77 18.71 L27.52 18.58 L25.96 22.32 L29.06 25.24 L25.24 29.06 L22.32 25.96 L18.58 27.52 L18.71 31.77 L13.29 31.77 L13.42 27.52 L9.68 25.96 L6.76 29.06 L2.94 25.24 L6.04 22.32 L4.48 18.58 L0.23 18.71 L0.23 13.29 L4.48 13.42 L6.04 9.68 L2.94 6.76 L6.76 2.94 L9.68 6.04Z" fill="#a9a9ae"/><circle cx="16" cy="16" r="11.8" fill="#a9a9ae"/><circle cx="16" cy="16" r="5.2" fill="#394454"/></svg>
<div class="a" style="left:181.00px;top:364.23px;font-size:23.57px;line-height:23.57px;color:#f2f2f2;white-space:nowrap;transform:scaleX(1.0011);transform-origin:0 0;-webkit-text-stroke:0.60px #f2f2f2;">Document Settings</div>
<svg class="a" style="left:74.5px;top:415.0px" width="24" height="18" viewBox="0 0 24 18"><path d="M4.5 4 L12 11 L19.5 4" stroke="#2a2a2a" stroke-width="4.6" fill="none" stroke-linecap="round" stroke-linejoin="round"/><path d="M4.5 4 L12 11 L19.5 4" stroke="#f0f0f0" stroke-width="1.5" fill="none" stroke-linecap="round" stroke-linejoin="round"/></svg>
<div class="a" style="left:114.3px;top:404.4px;width:235.7px;height:39.4px;background:#394454;box-shadow:0 0 5px rgba(60,60,80,0.14), inset 0 0 0 1px #303a48"></div>
<svg class="a" style="left:120.0px;top:409.7px" width="33" height="29" viewBox="0 0 33 29"><path d="M0 0 H11 L14 4 H0 Z" fill="#b9b9b9"/><path d="M0 7 H14 L17 4 H32.3 V28.3 H0 Z" fill="#d6d6d6"/></svg>
<div class="a" style="left:181.00px;top:412.23px;font-size:23.57px;line-height:23.57px;color:#f2f2f2;white-space:nowrap;transform:scaleX(0.9678);transform-origin:0 0;-webkit-text-stroke:0.60px #f2f2f2;">Named Views</div>
<div class="a" style="left:150.2px;top:452.2px;width:131.5px;height:39.5px;background:#394454;box-shadow:0 0 5px rgba(60,60,80,0.14), inset 0 0 0 1px #303a48"></div>
<svg class="a" style="left:156.0px;top:456.2px" width="32" height="32" viewBox="0 0 32 32"><rect x="0" y="0" width="32" height="32" fill="#d5d5d5"/><rect x="5" y="5" width="22" height="22" fill="none" stroke="#8c8c8c" stroke-width="2"/><path d="M11.5 10 V21.5 H23" stroke="#6a6a6a" stroke-width="2.2" fill="none"/><path d="M11.5 21.5 L21 12" stroke="#6a6a6a" stroke-width="2.2"/><path d="M8.5 12 L11.5 7.5 L14.5 12 Z M21 18.5 L25.5 21.5 L21 24.5 Z" fill="#6a6a6a"/></svg>
<div class="a" style="left:217.30px;top:459.56px;font-size:24.00px;line-height:24.00px;color:#f2f2f2;white-space:nowrap;transform:scaleX(0.8517);transform-origin:0 0;-webkit-text-stroke:0.60px #f2f2f2;">TOP</div>
<div class="a" style="left:150.2px;top:500.2px;width:163.5px;height:39.5px;background:#394454;box-shadow:0 0 5px rgba(60,60,80,0.14), inset 0 0 0 1px #303a48"></div>
<svg class="a" style="left:156.0px;top:504.2px" width="32" height="32" viewBox="0 0 32 32"><rect x="0" y="0" width="32" height="32" fill="#d5d5d5"/><rect x="5" y="5" width="22" height="22" fill="none" stroke="#8c8c8c" stroke-width="2"/><path d="M11.5 10 V21.5 H23" stroke="#6a6a6a" stroke-width="2.2" fill="none"/><path d="M11.5 21.5 L21 12" stroke="#6a6a6a" stroke-width="2.2"/><path d="M8.5 12 L11.5 7.5 L14.5 12 Z M21 18.5 L25.5 21.5 L21 24.5 Z" fill="#6a6a6a"/></svg>
<div class="a" style="left:217.30px;top:507.56px;font-size:24.00px;line-height:24.00px;color:#f2f2f2;white-space:nowrap;transform:scaleX(0.8599);transform-origin:0 0;-webkit-text-stroke:0.60px #f2f2f2;">FRONT</div>
<div class="a" style="left:150.2px;top:548.2px;width:155.7px;height:39.5px;background:#394454;box-shadow:0 0 5px rgba(60,60,80,0.14), inset 0 0 0 1px #303a48"></div>
<svg class="a" style="left:156.0px;top:552.2px" width="32" height="32" viewBox="0 0 32 32"><rect x="0" y="0" width="32" height="32" fill="#d5d5d5"/><rect x="5" y="5" width="22" height="22" fill="none" stroke="#8c8c8c" stroke-width="2"/><path d="M11.5 10 V21.5 H23" stroke="#6a6a6a" stroke-width="2.2" fill="none"/><path d="M11.5 21.5 L21 12" stroke="#6a6a6a" stroke-width="2.2"/><path d="M8.5 12 L11.5 7.5 L14.5 12 Z M21 18.5 L25.5 21.5 L21 24.5 Z" fill="#6a6a6a"/></svg>
<div class="a" style="left:217.30px;top:555.56px;font-size:24.00px;line-height:24.00px;color:#f2f2f2;white-space:nowrap;transform:scaleX(0.8641);transform-origin:0 0;-webkit-text-stroke:0.60px #f2f2f2;">RIGHT</div>
<div class="a" style="left:150.2px;top:596.2px;width:155.7px;height:39.5px;background:#394454;box-shadow:0 0 5px rgba(60,60,80,0.14), inset 0 0 0 1px #303a48"></div>
<svg class="a" style="left:156.0px;top:600.2px" width="32" height="32" viewBox="0 0 32 32"><rect x="0" y="0" width="32" height="32" fill="#d5d5d5"/><rect x="5" y="5" width="22" height="22" fill="none" stroke="#8c8c8c" stroke-width="2"/><path d="M11.5 10 V21.5 H23" stroke="#6a6a6a" stroke-width="2.2" fill="none"/><path d="M11.5 21.5 L21 12" stroke="#6a6a6a" stroke-width="2.2"/><path d="M8.5 12 L11.5 7.5 L14.5 12 Z M21 18.5 L25.5 21.5 L21 24.5 Z" fill="#6a6a6a"/></svg>
<div class="a" style="left:217.30px;top:603.56px;font-size:24.00px;line-height:24.00px;color:#f2f2f2;white-space:nowrap;transform:scaleX(0.8694);transform-origin:0 0;-webkit-text-stroke:0.60px #f2f2f2;">HOME</div>
<svg class="a" style="left:74.5px;top:659.2px" width="24" height="18" viewBox="0 0 24 18"><path d="M4.5 4 L12 11 L19.5 4" stroke="#2a2a2a" stroke-width="4.6" fill="none" stroke-linecap="round" stroke-linejoin="round"/><path d="M4.5 4 L12 11 L19.5 4" stroke="#f0f0f0" stroke-width="1.5" fill="none" stroke-linecap="round" stroke-linejoin="round"/></svg>
<div class="a" style="left:114.3px;top:644.2px;width:205.5px;height:39.6px;background:#394454;box-shadow:0 0 5px rgba(60,60,80,0.14), inset 0 0 0 1px #303a48"></div>
<svg class="a" style="left:119.0px;top:651.7px" width="34" height="26" viewBox="0 0 34 26"><path d="M2 13 Q17 -2 32 13 Q17 28 2 13 Z" fill="none" stroke="#cfcfcf" stroke-width="2"/><circle cx="17" cy="13" r="5" fill="none" stroke="#cfcfcf" stroke-width="2"/><path d="M5 1.5 L28 24.5" stroke="#394454" stroke-width="4"/><path d="M5 1.5 L28 24.5" stroke="#cfcfcf" stroke-width="2"/></svg>
<svg class="a" style="left:169.8px;top:650.0px" width="33" height="29" viewBox="0 0 33 29"><path d="M0 0 H11 L14 4 H0 Z" fill="#b9b9b9"/><path d="M0 7 H14 L17 4 H32.3 V28.3 H0 Z" fill="#d6d6d6"/></svg>
<div class="a" style="left:230.50px;top:651.76px;font-size:24.00px;line-height:24.00px;color:#f2f2f2;white-space:nowrap;transform:scaleX(1.0003);transform-origin:0 0;-webkit-text-stroke:0.60px #f2f2f2;">Origin</div>
<div class="a" style="left:150.2px;top:692.4px;width:149.6px;height:39.4px;background:#394454;box-shadow:0 0 5px rgba(60,60,80,0.14), inset 0 0 0 1px #303a48"></div>
<svg class="a" style="left:156.0px;top:702.0px" width="32" height="21" viewBox="0 0 32 21"><path d="M0.5 10.5 C7 1 25 1 31.5 10.5 C25 20 7 20 0.5 10.5 Z" fill="#7b8493"/><circle cx="16" cy="10.5" r="4.8" fill="#717a88" stroke="#2d3645" stroke-width="1.7"/></svg>
<svg class="a" style="left:205.0px;top:695.7px" width="32" height="32" viewBox="0 0 32 32"><path d="M16 6 L26 16 L16 26 L6 16 Z" fill="#f5a86a"/><path d="M16 0.5 V31.5 M0.5 16 H31.5" stroke="#f5a86a" stroke-width="2.6"/><rect x="13.3" y="13.3" width="5.4" height="5.4" fill="#2d3746"/></svg>
<div class="a" style="left:266.00px;top:699.68px;font-size:23.86px;line-height:23.86px;color:#f2f2f2;white-space:nowrap;transform:scaleX(0.8759);transform-origin:0 0;-webkit-text-stroke:0.60px #f2f2f2;">O</div>
<div class="a" style="left:150.2px;top:740.4px;width:157.6px;height:39.4px;background:#394454;box-shadow:0 0 5px rgba(60,60,80,0.14), inset 0 0 0 1px #303a48"></div>
<svg class="a" style="left:156.0px;top:750.0px" width="32" height="21" viewBox="0 0 32 21"><path d="M0.5 10.5 C7 1 25 1 31.5 10.5 C25 20 7 20 0.5 10.5 Z" fill="#7b8493"/><circle cx="16" cy="10.5" r="4.8" fill="#717a88" stroke="#2d3645" stroke-width="1.7"/></svg>
<svg class="a" style="left:205.0px;top:742.1px" width="36" height="36" viewBox="0 0 36 36"><rect x="9" y="1" width="24" height="24" fill="#d6d6d6"/><path d="M2 32 L19 15" stroke="#2d3746" stroke-width="5" stroke-linecap="square"/><path d="M2.5 31.5 L19 15" stroke="#f5a86a" stroke-width="2.2" stroke-linecap="round"/></svg>
<div class="a" style="left:265.70px;top:747.68px;font-size:23.86px;line-height:23.86px;color:#f2f2f2;white-space:nowrap;transform:scaleX(0.8572);transform-origin:0 0;-webkit-text-stroke:0.60px #f2f2f2;">X</div>
<div class="a" style="left:150.2px;top:788.4px;width:149.7px;height:39.4px;background:#394454;box-shadow:0 0 5px rgba(60,60,80,0.14), inset 0 0 0 1px #303a48"></div>
<svg class="a" style="left:156.0px;top:798.0px" width="32" height="21" viewBox="0 0 32 21"><path d="M0.5 10.5 C7 1 25 1 31.5 10.5 C25 20 7 20 0.5 10.5 Z" fill="#7b8493"/><circle cx="16" cy="10.5" r="4.8" fill="#717a88" stroke="#2d3645" stroke-width="1.7"/></svg>
<svg class="a" style="left:205.0px;top:790.1px" width="36" height="36" viewBox="0 0 36 36"><rect x="9" y="1" width="24" height="24" fill="#d6d6d6"/><path d="M2 32 L19 15" stroke="#2d3746" stroke-width="5" stroke-linecap="square"/><path d="M2.5 31.5 L19 15" stroke="#f5a86a" stroke-width="2.2" stroke-linecap="round"/></svg>
<div class="a" style="left:265.50px;top:795.68px;font-size:23.86px;line-height:23.86px;color:#f2f2f2;white-space:nowrap;transform:scaleX(0.9140);transform-origin:0 0;-webkit-text-stroke:0.60px #f2f2f2;">Y</div>
<div class="a" style="left:150.2px;top:836.4px;width:149.7px;height:39.4px;background:#394454;box-shadow:0 0 5px rgba(60,60,80,0.14), inset 0 0 0 1px #303a48"></div>
<svg class="a" style="left:156.0px;top:846.0px" width="32" height="21" viewBox="0 0 32 21"><path d="M0.5 10.5 C7 1 25 1 31.5 10.5 C25 20 7 20 0.5 10.5 Z" fill="#7b8493"/><circle cx="16" cy="10.5" r="4.8" fill="#717a88" stroke="#2d3645" stroke-width="1.7"/></svg>
<svg class="a" style="left:205.0px;top:838.1px" width="36" height="36" viewBox="0 0 36 36"><rect x="9" y="1" width="24" height="24" fill="#d6d6d6"/><path d="M2 32 L19 15" stroke="#2d3746" stroke-width="5" stroke-linecap="square"/><path d="M2.5 31.5 L19 15" stroke="#f5a86a" stroke-width="2.2" stroke-linecap="round"/></svg>
<div class="a" style="left:265.80px;top:843.68px;font-size:23.86px;line-height:23.86px;color:#f2f2f2;white-space:nowrap;transform:scaleX(0.9414);transform-origin:0 0;-webkit-text-stroke:0.60px #f2f2f2;">Z</div>
<div class="a" style="left:150.2px;top:884.4px;width:165.7px;height:39.4px;background:#394454;box-shadow:0 0 5px rgba(60,60,80,0.14), inset 0 0 0 1px #303a48"></div>
<svg class="a" style="left:156.0px;top:894.0px" width="32" height="21" viewBox="0 0 32 21"><path d="M0.5 10.5 C7 1 25 1 31.5 10.5 C25 20 7 20 0.5 10.5 Z" fill="#7b8493"/><circle cx="16" cy="10.5" r="4.8" fill="#717a88" stroke="#2d3645" stroke-width="1.7"/></svg>
<svg class="a" style="left:205.9px;top:888.1px" width="34" height="34" viewBox="0 0 34 34"><rect x="8" y="0" width="24" height="24" fill="#d8d8d8"/><rect x="8" y="6" width="18" height="18" fill="#2d3746"/><rect x="0" y="8" width="24" height="24" fill="#f8ae76"/><rect x="8" y="8" width="16" height="16" fill="#f2c29e"/><path d="M9 8 V23 H24" stroke="#cf9466" stroke-width="2" fill="none"/></svg>
<div class="a" style="left:266.10px;top:891.68px;font-size:23.86px;line-height:23.86px;color:#f2f2f2;white-space:nowrap;transform:scaleX(0.8415);transform-origin:0 0;-webkit-text-stroke:0.60px #f2f2f2;">XY</div>
<div class="a" style="left:150.2px;top:932.4px;width:165.7px;height:39.4px;background:#394454;box-shadow:0 0 5px rgba(60,60,80,0.14), inset 0 0 0 1px #303a48"></div>
<svg class="a" style="left:156.0px;top:942.0px" width="32" height="21" viewBox="0 0 32 21"><path d="M0.5 10.5 C7 1 25 1 31.5 10.5 C25 20 7 20 0.5 10.5 Z" fill="#7b8493"/><circle cx="16" cy="10.5" r="4.8" fill="#717a88" stroke="#2d3645" stroke-width="1.7"/></svg>
<div class="a" style="left:199.3px;top:931.4px;width:117.3px;height:41.6px;background:#394454;border:2px solid #7b7d80"></div>
<div class="a" style="left:201.3px;top:933.4px;width:48.2px;height:37.6px;background:#35404f;"></div>
<div class="a" style="left:249.5px;top:933.4px;width:65.1px;height:37.6px;background:#1f78a2;"></div>
<svg class="a" style="left:205.9px;top:936.1px" width="34" height="34" viewBox="0 0 34 34"><rect x="8" y="0" width="24" height="24" fill="#d8d8d8"/><rect x="8" y="6" width="18" height="18" fill="#2d3746"/><rect x="0" y="8" width="24" height="24" fill="#f8ae76"/><rect x="8" y="8" width="16" height="16" fill="#f2c29e"/><path d="M9 8 V23 H24" stroke="#cf9466" stroke-width="2" fill="none"/></svg>
<div class="a" style="left:266.10px;top:939.68px;font-size:23.86px;line-height:23.86px;color:#f2f2f2;white-space:nowrap;transform:scaleX(0.8481);transform-origin:0 0;-webkit-text-stroke:0.60px #f2f2f2;">XZ</div>
<div class="a" style="left:150.2px;top:980.4px;width:165.7px;height:39.4px;background:#394454;box-shadow:0 0 5px rgba(60,60,80,0.14), inset 0 0 0 1px #303a48"></div>
<svg class="a" style="left:156.0px;top:990.0px" width="32" height="21" viewBox="0 0 32 21"><path d="M0.5 10.5 C7 1 25 1 31.5 10.5 C25 20 7 20 0.5 10.5 Z" fill="#7b8493"/><circle cx="16" cy="10.5" r="4.8" fill="#717a88" stroke="#2d3645" stroke-width="1.7"/></svg>
<svg class="a" style="left:205.9px;top:984.1px" width="34" height="34" viewBox="0 0 34 34"><rect x="8" y="0" width="24" height="24" fill="#d8d8d8"/><rect x="8" y="6" width="18" height="18" fill="#2d3746"/><rect x="0" y="8" width="24" height="24" fill="#f8ae76"/><rect x="8" y="8" width="16" height="16" fill="#f2c29e"/><path d="M9 8 V23 H24" stroke="#cf9466" stroke-width="2" fill="none"/></svg>
<div class="a" style="left:266.10px;top:987.68px;font-size:23.86px;line-height:23.86px;color:#f2f2f2;white-space:nowrap;transform:scaleX(0.8645);transform-origin:0 0;-webkit-text-stroke:0.60px #f2f2f2;">YZ</div>
<svg class="a" style="left:77.5px;top:1037.4px" width="18" height="24" viewBox="0 0 18 24"><path d="M4 4 L11 12 L4 20" stroke="#2a2a2a" stroke-width="4.6" fill="none" stroke-linecap="round" stroke-linejoin="round"/><path d="M4 4 L11 12 L4 20" stroke="#f0f0f0" stroke-width="1.5" fill="none" stroke-linecap="round" stroke-linejoin="round"/></svg>
<div class="a" style="left:114.3px;top:1028.4px;width:213.5px;height:39.3px;background:#394454;box-shadow:0 0 5px rgba(60,60,80,0.14), inset 0 0 0 1px #303a48"></div>
<svg class="a" style="left:120.0px;top:1037.9px" width="32" height="21" viewBox="0 0 32 21"><path d="M0.5 10.5 C7 1 25 1 31.5 10.5 C25 20 7 20 0.5 10.5 Z" fill="#d0d0d0"/><circle cx="16" cy="10.5" r="5.3" fill="#bcbcbc" stroke="#394454" stroke-width="2"/></svg>
<svg class="a" style="left:169.8px;top:1034.2px" width="33" height="29" viewBox="0 0 33 29"><path d="M0 0 H11 L14 4 H0 Z" fill="#b9b9b9"/><path d="M0 7 H14 L17 4 H32.3 V28.3 H0 Z" fill="#d6d6d6"/></svg>
<div class="a" style="left:230.60px;top:1035.76px;font-size:24.00px;line-height:24.00px;color:#f2f2f2;white-space:nowrap;transform:scaleX(0.9218);transform-origin:0 0;-webkit-text-stroke:0.60px #f2f2f2;">Bodies</div>
<svg class="a" style="left:77.5px;top:1085.4px" width="18" height="24" viewBox="0 0 18 24"><path d="M4 4 L11 12 L4 20" stroke="#2a2a2a" stroke-width="4.6" fill="none" stroke-linecap="round" stroke-linejoin="round"/><path d="M4 4 L11 12 L4 20" stroke="#f0f0f0" stroke-width="1.5" fill="none" stroke-linecap="round" stroke-linejoin="round"/></svg>
<div class="a" style="left:114.3px;top:1076.4px;width:237.7px;height:39.3px;background:#394454;box-shadow:0 0 5px rgba(60,60,80,0.14), inset 0 0 0 1px #303a48"></div>
<svg class="a" style="left:120.0px;top:1085.9px" width="32" height="21" viewBox="0 0 32 21"><path d="M0.5 10.5 C7 1 25 1 31.5 10.5 C25 20 7 20 0.5 10.5 Z" fill="#d0d0d0"/><circle cx="16" cy="10.5" r="5.3" fill="#bcbcbc" stroke="#394454" stroke-width="2"/></svg>
<svg class="a" style="left:169.8px;top:1082.2px" width="33" height="29" viewBox="0 0 33 29"><path d="M0 0 H11 L14 4 H0 Z" fill="#b9b9b9"/><path d="M0 7 H14 L17 4 H32.3 V28.3 H0 Z" fill="#d6d6d6"/></svg>
<div class="a" style="left:230.60px;top:1083.76px;font-size:24.00px;line-height:24.00px;color:#f2f2f2;white-space:nowrap;transform:scaleX(0.9255);transform-origin:0 0;-webkit-text-stroke:0.60px #f2f2f2;">Sketches</div>
</body></html>
